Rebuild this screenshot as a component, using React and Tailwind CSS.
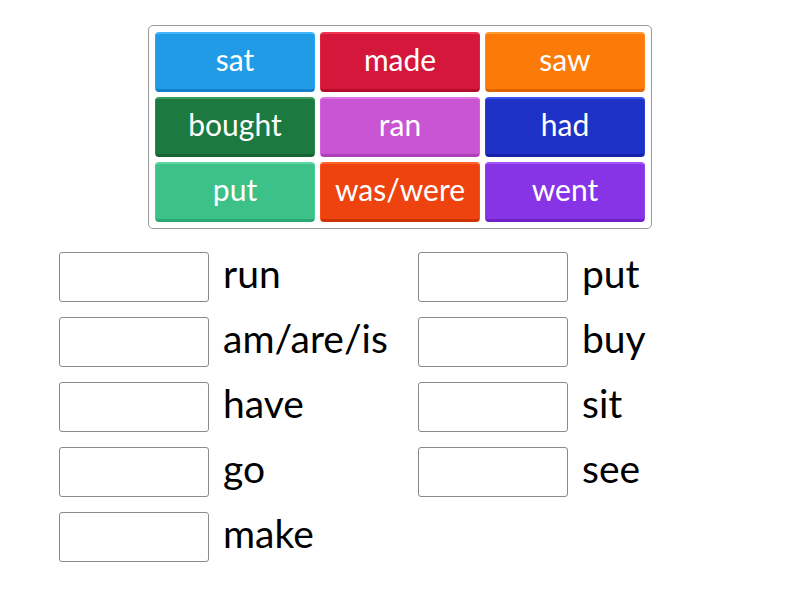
import React from 'react';

const tiles = [
  { label: 'sat', cls: 'bg-[#229be6] border-t-[#45b6fb] border-x-[#2aa6f2] border-b-[#1580cc]' },
  { label: 'made', cls: 'bg-[#d4173a] border-t-[#ee3552] border-x-[#dd2443] border-b-[#b50d2c]' },
  { label: 'saw', cls: 'bg-[#fc7a08] border-t-[#ff9a30] border-x-[#ff8618] border-b-[#e06400]' },
  { label: 'bought', cls: 'bg-[#1c7a40] border-t-[#3b9e60] border-x-[#238a4a] border-b-[#146434]' },
  { label: 'ran', cls: 'bg-[#c955d3] border-t-[#e072ea] border-x-[#d461de] border-b-[#ad40b8]' },
  { label: 'had', cls: 'bg-[#1e32c8] border-t-[#3a52e6] border-x-[#2a40d6] border-b-[#1424a8]' },
  { label: 'put', cls: 'bg-[#3cc288] border-t-[#5ad9a1] border-x-[#48cc93] border-b-[#2ca672]' },
  { label: 'was/were', cls: 'bg-[#ee430f] border-t-[#ff6628] border-x-[#f85218] border-b-[#cc3405]' },
  { label: 'went', cls: 'bg-[#8734e6] border-t-[#a255fb] border-x-[#9242f0] border-b-[#6f22c8]' },
];

const left = ['run', 'am/are/is', 'have', 'go', 'make'];
const right = ['put', 'buy', 'sit', 'see'];

function Row({ word }) {
  return (
    <div className="flex items-center h-[50px]">
      <div className="w-[150px] h-[50px] border border-[#8a8a8a] rounded-[3px] bg-white shrink-0" />
      <span className="ml-[14px] text-[39px] leading-none text-black pb-[7px]">{word}</span>
    </div>
  );
}

export default function App() {
  return (
    <div className="w-[800px] h-[600px] bg-white" style={{ fontFamily: 'Lato, "Noto Sans", sans-serif' }}>
      <div className="pt-[25px] flex justify-center">
        <div className="w-[504px] border border-[#9a9a9a] rounded-[5px] p-[6px] grid grid-cols-3 gap-[5px]">
          {tiles.map((t) => (
            <div
              key={t.label}
              className={`h-[60px] rounded-[4px] border-t-2 border-x border-b-[3px] flex items-center justify-center text-white text-[30px] leading-none pb-[5px] ${t.cls}`}
            >
              {t.label}
            </div>
          ))}
        </div>
      </div>
      <div className="mt-[23px] ml-[59px] flex">
        <div className="w-[359px] flex flex-col gap-[15px]">
          {left.map((w) => <Row key={w} word={w} />)}
        </div>
        <div className="flex flex-col gap-[15px]">
          {right.map((w) => <Row key={w} word={w} />)}
        </div>
      </div>
    </div>
  );
}
